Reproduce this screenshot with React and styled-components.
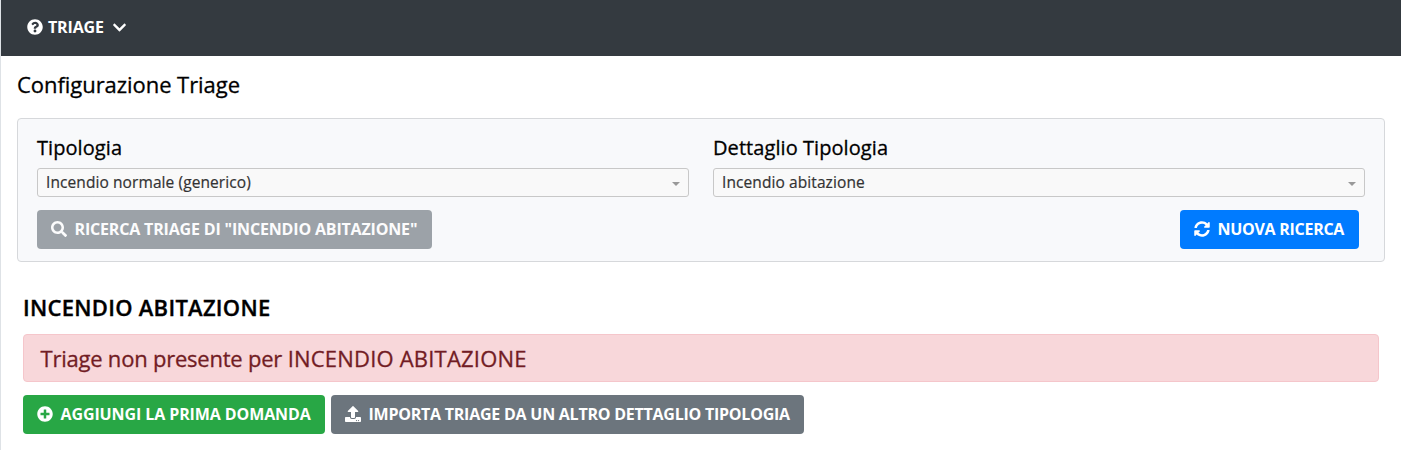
import React from "react";
import styled, { createGlobalStyle } from "styled-components";
import { FaQuestionCircle, FaChevronDown, FaSearch, FaSyncAlt, FaPlusCircle, FaUpload } from "react-icons/fa";

const GlobalStyle = createGlobalStyle`
  *, *::before, *::after { box-sizing: border-box; }
  body {
    margin: 0;
    background: #fff;
    color: #000;
    font-family: "Segoe UI", "Open Sans", "Noto Sans", sans-serif;
    font-size: 16px;
  }
  h1, h2, h3 { margin: 0; }
`;

const Page = styled.div`
  height: 450px;
  overflow: hidden;
  border-left: 1px solid #dee2e6;
`;

const Navbar = styled.nav`
  display: flex;
  align-items: center;
  height: 56px;
  padding: 0 26px 2px;
  background: #343a40;
  color: #fff;
`;

const NavItem = styled.a`
  display: flex;
  align-items: center;
  gap: 5px;
  height: 24px;
  font-weight: 700;
  line-height: 24px;
  svg { display: block; flex: none; }
  svg:last-child { margin-left: 3px; }
`;

const Label = styled.span`
  white-space: pre;
  letter-spacing: ${({ $track }) => $track || 0}px;
`;

const Main = styled.main`
  padding: 0 16px;
`;

const PageTitle = styled.h1`
  height: 62px;
  padding-top: 12px;
  font-size: 22px;
  font-weight: 500;
  line-height: 32px;
  -webkit-text-stroke: 0.3px;
`;

const Card = styled.section`
  height: 144px;
  padding: 16px 19px 0;
  border: 1px solid #d6d8db;
  border-radius: 4px;
  background: #f8f9fb;
`;

const Fields = styled.div`
  display: grid;
  grid-template-columns: 1fr 1fr;
  gap: 24px;
`;

const FieldLabel = styled.h3`
  height: 33px;
  font-size: 20px;
  font-weight: 500;
  line-height: 26px;
  -webkit-text-stroke: 0.3px;
`;

const Select = styled.div`
  display: flex;
  align-items: center;
  justify-content: space-between;
  height: 29px;
  padding: 0 8px;
  border: 1px solid #c8c8c8;
  border-radius: 3px;
  background: #f9f9f9;
  color: #333;
  font-size: 15.5px;
  line-height: 27px;
  -webkit-text-stroke: 0.2px;
`;

const Caret = styled.span`
  border: 4px solid transparent;
  border-top-color: #999;
  border-bottom: 0;
  margin-top: 3px;
`;

const CardActions = styled.div`
  display: flex;
  justify-content: space-between;
  margin-top: 13px;
  padding-right: 6px;
`;

const Button = styled.button`
  display: flex;
  align-items: center;
  gap: 7.5px;
  width: ${({ $width }) => $width}px;
  height: 39px;
  padding: 0 14px 1px;
  border: 0;
  border-radius: 4px;
  background: ${({ $color }) => $color};
  color: #fff;
  font-family: inherit;
  font-size: 16px;
  font-weight: 700;
  line-height: 24px;
  opacity: ${({ disabled }) => (disabled ? 0.65 : 1)};
  svg { display: block; flex: none; }
`;

const Results = styled.section`
  padding: 30px 6px 0;
`;

const ResultTitle = styled.h2`
  height: 42px;
  font-size: 22px;
  font-weight: 600;
  line-height: 30px;
  -webkit-text-stroke: 0.35px;
`;

const Alert = styled.div`
  height: 48px;
  padding: 0 16.5px;
  border: 1px solid #f5c6cb;
  border-radius: 4px;
  background: #f8d7da;
  color: #721c24;
  font-size: 22px;
  font-weight: 500;
  line-height: 47px;
  -webkit-text-stroke: 0.3px;
`;

const Actions = styled.div`
  display: flex;
  gap: 6px;
  margin-top: 13px;
`;

function Field({ label, value }) {
  return (
    <div>
      <FieldLabel><Label $track={0.07}>{label}</Label></FieldLabel>
      <Select>
        <Label $track={0.09}>{value}</Label>
        <Caret />
      </Select>
    </div>
  );
}

export default function App() {
  return (
    <Page>
      <GlobalStyle />
      <Navbar>
        <NavItem>
          <FaQuestionCircle size={16} />
          <Label $track={-0.15}>TRIAGE</Label>
          <FaChevronDown size={15} />
        </NavItem>
      </Navbar>
      <Main>
        <PageTitle><Label $track={-0.05}>Configurazione Triage</Label></PageTitle>
        <Card>
          <Fields>
            <Field label="Tipologia" value="Incendio normale (generico)" />
            <Field label="Dettaglio Tipologia" value="Incendio abitazione" />
          </Fields>
          <CardActions>
            <Button disabled $color="#6c757d" $width={395}>
              <FaSearch size={16} />
              <Label $track={-0.17}>RICERCA TRIAGE DI "INCENDIO ABITAZIONE"</Label>
            </Button>
            <Button $color="#007bff" $width={179}>
              <FaSyncAlt size={16} />
              <Label $track={-0.28}>NUOVA RICERCA</Label>
            </Button>
          </CardActions>
        </Card>
        <Results>
          <ResultTitle><Label $track={0.28}>INCENDIO ABITAZIONE</Label></ResultTitle>
          <Alert>
            <Label $track={-0.22}>{"Triage non presente per "}</Label>
            <Label $track={0.2}>INCENDIO ABITAZIONE</Label>
          </Alert>
          <Actions>
            <Button $color="#28a745" $width={302}>
              <FaPlusCircle size={16} />
              <Label $track={-0.1}>AGGIUNGI LA PRIMA DOMANDA</Label>
            </Button>
            <Button $color="#6c757d" $width={473}>
              <FaUpload size={16} />
              <Label $track={-0.24}>IMPORTA TRIAGE DA UN ALTRO DETTAGLIO TIPOLOGIA</Label>
            </Button>
          </Actions>
        </Results>
      </Main>
    </Page>
  );
}
